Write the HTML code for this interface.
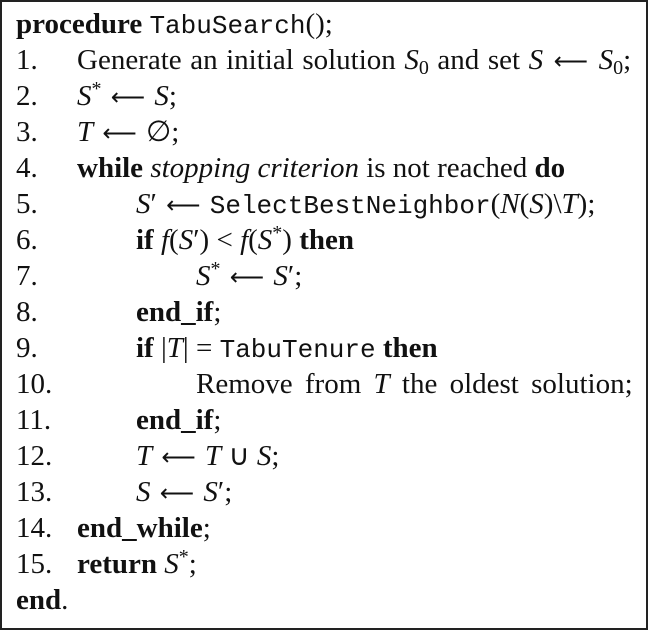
<!DOCTYPE html>
<html><head><style>
body{margin:0;background:#fff;}
#b{position:absolute;left:0;top:0;width:644px;height:626px;border:2px solid #222;}
.l{position:absolute;left:16px;font-family:"Liberation Serif",serif;font-size:29px;color:#111;white-space:nowrap;line-height:30px;}
.n{position:absolute;left:0;}
.t{position:absolute;}
.m{font-family:"Liberation Mono",monospace;font-size:26px;}
.a{font-family:"DejaVu Sans",sans-serif;font-size:24px;margin:0 2px;}
i{font-style:italic;}
sub{font-size:20px;vertical-align:-5px;line-height:0;}
sup{font-size:20px;vertical-align:10px;line-height:0;}
</style></head><body>
<div id="b"></div>
<div class="l" style="top:9px"><b>procedure</b> <span class="m">TabuSearch</span>();</div>
<div class="l" style="top:45px"><span class="n">1.</span><span class="t" style="left:61px;word-spacing:1.3px">Generate an initial solution <i>S</i><sub>0</sub> and set <i>S</i> <span class="a">⟵</span> <i>S</i><sub>0</sub>;</span></div>
<div class="l" style="top:81px"><span class="n">2.</span><span class="t" style="left:61px"><i>S</i><sup>*</sup> <span class="a">⟵</span> <i>S</i>;</span></div>
<div class="l" style="top:117px"><span class="n">3.</span><span class="t" style="left:61px"><i>T</i> <span class="a">⟵</span> ∅;</span></div>
<div class="l" style="top:153px"><span class="n">4.</span><span class="t" style="left:61px"><b>while</b> <i>stopping criterion</i> is not reached <b>do</b></span></div>
<div class="l" style="top:189px"><span class="n">5.</span><span class="t" style="left:120px"><i>S</i>′ <span class="a">⟵</span> <span class="m">SelectBestNeighbor</span>(<i>N</i>(<i>S</i>)\<i>T</i>);</span></div>
<div class="l" style="top:225px"><span class="n">6.</span><span class="t" style="left:120px"><b>if</b> <i>f</i>(<i>S</i>′) &lt; <i>f</i>(<i>S</i><sup>*</sup>) <b>then</b></span></div>
<div class="l" style="top:261px"><span class="n">7.</span><span class="t" style="left:180px"><i>S</i><sup>*</sup> <span class="a">⟵</span> <i>S</i>′;</span></div>
<div class="l" style="top:297px"><span class="n">8.</span><span class="t" style="left:120px"><b>end_if</b>;</span></div>
<div class="l" style="top:333px"><span class="n">9.</span><span class="t" style="left:120px"><b>if</b> |<i>T</i>| = <span class="m">TabuTenure</span> <b>then</b></span></div>
<div class="l" style="top:369px"><span class="n">10.</span><span class="t" style="left:180px;word-spacing:5px">Remove from <i>T</i> the oldest solution;</span></div>
<div class="l" style="top:405px"><span class="n">11.</span><span class="t" style="left:120px"><b>end_if</b>;</span></div>
<div class="l" style="top:441px"><span class="n">12.</span><span class="t" style="left:120px"><i>T</i> <span class="a">⟵</span> <i>T</i> ∪ <i>S</i>;</span></div>
<div class="l" style="top:477px"><span class="n">13.</span><span class="t" style="left:120px"><i>S</i> <span class="a">⟵</span> <i>S</i>′;</span></div>
<div class="l" style="top:513px"><span class="n">14.</span><span class="t" style="left:61px"><b>end_while</b>;</span></div>
<div class="l" style="top:549px"><span class="n">15.</span><span class="t" style="left:61px"><b>return</b> <i>S</i><sup>*</sup>;</span></div>
<div class="l" style="top:585px"><b>end</b>.</div>
</body></html>
